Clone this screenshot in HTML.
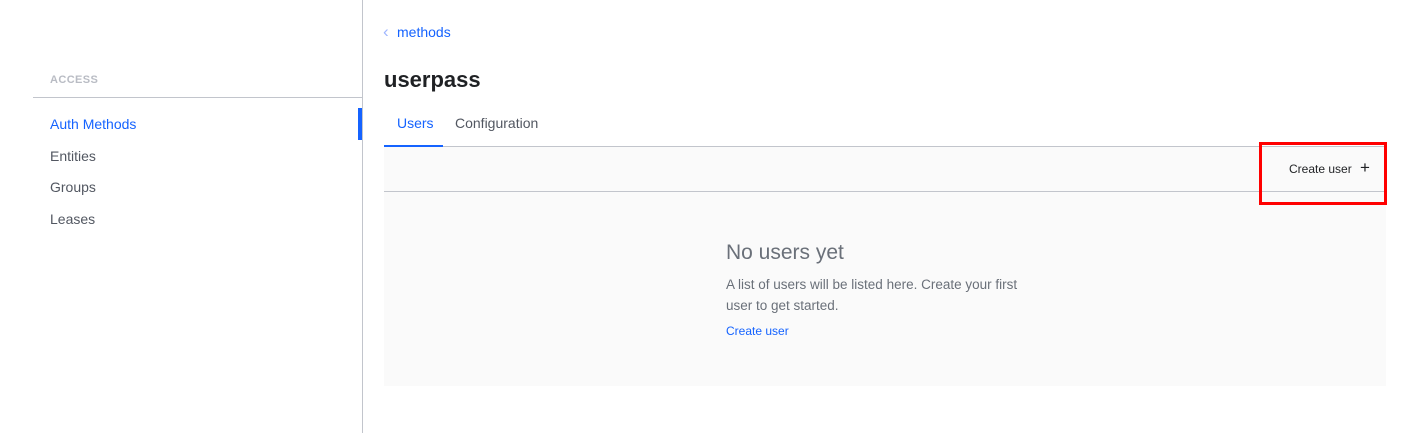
<!DOCTYPE html>
<html><head><meta charset="utf-8"><style>
*{margin:0;padding:0;box-sizing:border-box}
body{width:1423px;height:433px;background:#fff;font-family:"Liberation Sans",sans-serif;position:relative;overflow:hidden;color:#525761}
.a{position:absolute;white-space:nowrap}
</style></head><body>
<div class="a" style="left:362px;top:0;width:1px;height:433px;background:#c2c5cc"></div>
<div class="a" style="left:50px;top:74px;font-size:11px;font-weight:bold;letter-spacing:0.4px;color:#b9bcc4">ACCESS</div>
<div class="a" style="left:33px;top:97px;width:329px;height:1px;background:#c2c5cc"></div>
<div class="a" style="left:358px;top:108px;width:4px;height:32px;background:#1563ff"></div>
<div class="a" style="left:50px;top:116px;font-size:14px;color:#1563ff;font-weight:500">Auth Methods</div>
<div class="a" style="left:50px;top:148px;font-size:14px;color:#525761;font-weight:500">Entities</div>
<div class="a" style="left:50px;top:179px;font-size:14px;color:#525761;font-weight:500">Groups</div>
<div class="a" style="left:50px;top:211px;font-size:14px;color:#525761;font-weight:500">Leases</div>

<div class="a" style="left:383px;top:22px;font-size:17px;color:#9fb6ff">&#x2039;</div>
<div class="a" style="left:397px;top:24px;font-size:14px;color:#1563ff">methods</div>
<div class="a" style="left:384px;top:67px;font-size:22px;font-weight:bold;color:#1f2124">userpass</div>
<div class="a" style="left:397px;top:115px;font-size:14px;color:#1563ff;font-weight:500">Users</div>
<div class="a" style="left:455px;top:115px;font-size:14px;color:#525761;font-weight:500">Configuration</div>
<div class="a" style="left:384px;top:146px;width:1002px;height:1px;background:#c2c5cc"></div>
<div class="a" style="left:384px;top:145px;width:59px;height:2px;background:#1563ff"></div>
<div class="a" style="left:384px;top:147px;width:1002px;height:239px;background:#fafafa"></div>
<div class="a" style="left:384px;top:191px;width:1002px;height:1px;background:#c2c5cc"></div>
<div class="a" style="left:1289px;top:162px;font-size:12px;color:#1f2124">Create user</div>
<div class="a" style="left:1360px;top:158px;font-size:17px;color:#1f2124">+</div>
<div class="a" style="left:1259px;top:142px;width:128px;height:63px;border:3px solid #f00"></div>

<div class="a" style="left:726px;top:241px;font-size:21px;color:#6a7079">No users yet</div>
<div class="a" style="left:726px;top:274px;font-size:13.5px;line-height:21px;color:#6a7079;white-space:normal;width:320px">A list of users will be listed here. Create your first<br>user to get started.</div>
<div class="a" style="left:726px;top:324px;font-size:12px;color:#1563ff">Create user</div>
</body></html>
